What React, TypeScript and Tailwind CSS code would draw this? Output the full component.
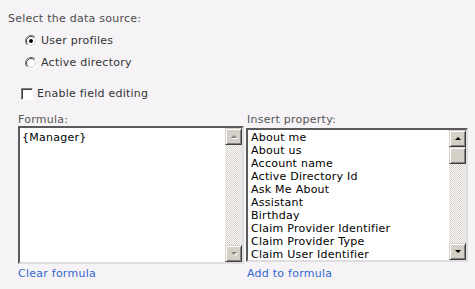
import React from "react";

const props = [
  "About me",
  "About us",
  "Account name",
  "Active Directory Id",
  "Ask Me About",
  "Assistant",
  "Birthday",
  "Claim Provider Identifier",
  "Claim Provider Type",
  "Claim User Identifier",
];

const btn =
  "w-[17px] h-[17px] bg-[#d4d0c8] border border-[#d4d0c8] border-b-[#404040] border-r-[#404040] shadow-[inset_1px_1px_#fff,inset_-1px_-1px_#808080] flex items-center justify-center";

const track =
  "flex-1 bg-[repeating-conic-gradient(#d4d0c8_0%_25%,#ffffff_0%_50%)] bg-[length:2px_2px]";

function Arrow({ up, disabled }: { up?: boolean; disabled?: boolean }) {
  const d = up ? "M1 4 L4 1 L7 4 Z" : "M1 1 L4 4 L7 1 Z";
  return (
    <svg width="8" height="6" viewBox="0 0 8 6">
      {disabled && <path d={d} fill="#fff" transform="translate(1 1)" />}
      <path d={d} fill={disabled ? "#808080" : "#000"} />
    </svg>
  );
}

function Radio({ checked }: { checked?: boolean }) {
  return (
    <svg width="12" height="12" viewBox="0 0 12 12" className="shrink-0">
      <circle cx="6" cy="6" r="5.5" fill="#fff" />
      <path d="M10 2 A5.5 5.5 0 0 0 2 10" stroke="#808080" fill="none" />
      <path d="M9.2 2.8 A4.5 4.5 0 0 0 2.8 9.2" stroke="#404040" fill="none" />
      <path d="M2 10 A5.5 5.5 0 0 0 10 2" stroke="#fff" fill="none" />
      <path d="M2.8 9.2 A4.5 4.5 0 0 0 9.2 2.8" stroke="#d4d0c8" fill="none" />
      {checked && <circle cx="6" cy="6" r="2" fill="#000" />}
    </svg>
  );
}

export default function App() {
  return (
    <div className="w-[475px] h-[289px] bg-[#f6f3f6] text-[11px] leading-[13px] tracking-[0.25px] font-['DejaVu_Sans',Verdana,sans-serif] text-[#4c4c4c] overflow-hidden">
      <div className="pt-[12px] pl-[8px]">Select the data source:</div>

      <div className="mt-[9px] pl-[25px] flex items-center gap-[4px] text-[#333]">
        <Radio checked />
        <span>User profiles</span>
      </div>
      <div className="mt-[9px] pl-[25px] flex items-center gap-[4px] text-[#333]">
        <Radio />
        <span>Active directory</span>
      </div>

      <div className="mt-[18px] pl-[21px] flex items-center gap-[4px] text-[#333]">
        <div className="w-[12px] h-[12px] bg-white border border-[#808080] border-b-[#fff] border-r-[#fff] shadow-[inset_1px_1px_#404040]" />
        <span>Enable field editing</span>
      </div>

      <div className="mt-[13px] flex">
        <div className="pl-[18px] w-[246px]">
          <div className="text-[#555]">Formula:</div>
          <div className="w-[226px] h-[138px] bg-white border-2 border-[#5a5a5a] border-b-[#e0dde0] border-r-[#e0dde0] flex">
            <div className="flex-1 pl-[2px] pt-[3px] text-black">{"{Manager}"}</div>
            <div className="w-[17px] flex flex-col">
              <div className={btn}>
                <Arrow up disabled />
              </div>
              <div className={track} />
              <div className={btn}>
                <Arrow disabled />
              </div>
            </div>
          </div>
          <div className="mt-[3px] text-[#3366cc]">Clear formula</div>
        </div>

        <div>
          <div className="pl-[1px] text-[#555]">Insert property:</div>
          <div className="mt-[2px] w-[222px] h-[134px] bg-white border-2 border-[#5a5a5a] border-b-[#e0dde0] border-r-[#e0dde0] flex">
            <div className="flex-1 pl-[3px] pt-[1px] text-black">
              {props.map((p) => (
                <div key={p} className="h-[13px] whitespace-nowrap">
                  {p}
                </div>
              ))}
            </div>
            <div className="w-[17px] flex flex-col">
              <div className={btn}>
                <Arrow up />
              </div>
              <div className={btn} />
              <div className={track} />
              <div className={btn}>
                <Arrow />
              </div>
            </div>
          </div>
          <div className="mt-[5px] pl-[1px] text-[#3366cc]">Add to formula</div>
        </div>
      </div>
    </div>
  );
}
